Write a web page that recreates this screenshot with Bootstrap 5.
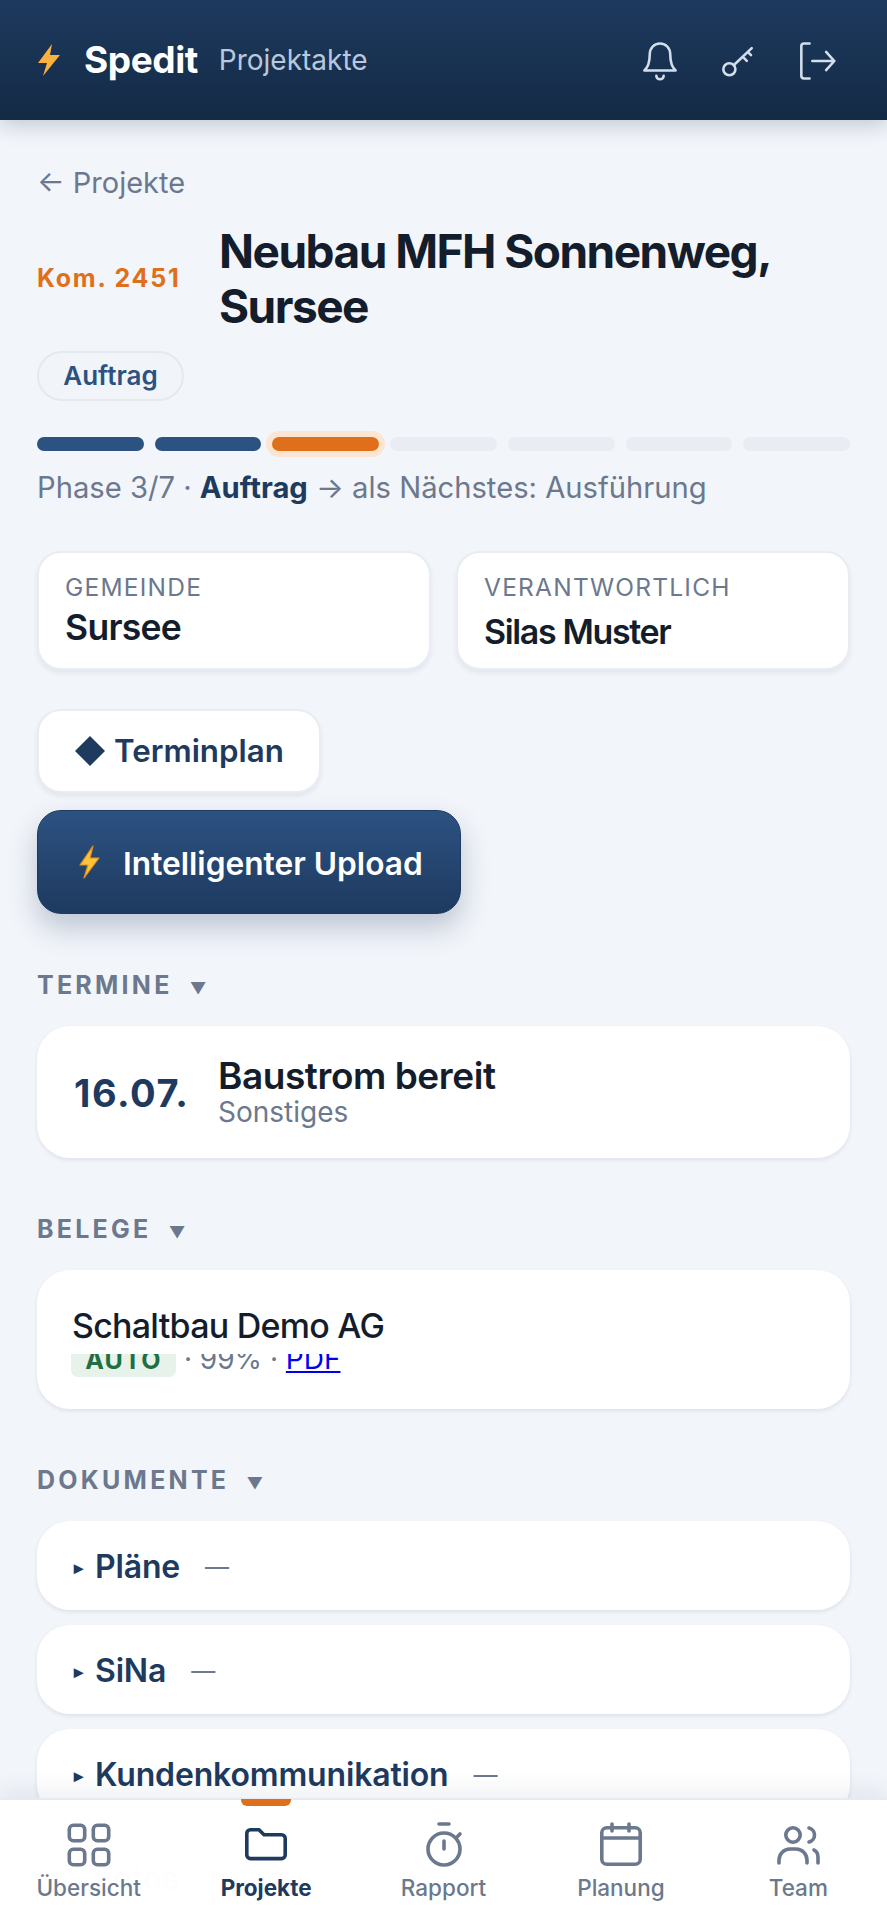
<!DOCTYPE html>
<html lang="de">
<head>
  <meta charset="UTF-8" />
  <meta name="viewport" content="width=device-width, initial-scale=1" />
  <title>Spedit Projektakte</title>
  <link href="https://cdn.jsdelivr.net/npm/bootstrap@5.3.0/dist/css/bootstrap.min.css" rel="stylesheet" />
  <style>
    html, body { height: 100%; overflow: hidden; }
    body { font-family: Inter, "Liberation Sans", sans-serif; background: #f2f5fa; color: #141d2b; }
    .app-shell { height: 1920px; overflow: hidden; position: relative; }

    .top-bar { height: 120px; padding: 0 49px 0 37px; background: linear-gradient(180deg, #1e3a5f, #132a45); box-shadow: 0 5px 20px rgba(20, 40, 70, .22); position: relative; z-index: 2; }
    .brand-name { font-size: 37px; font-weight: 700; color: #fff; letter-spacing: -.012em; margin-left: 23px; }
    .brand-sub { font-size: 28px; color: #b9c8dc; margin-left: 21px; }
    .top-icons { gap: 34px; color: #d3deeb; padding-top: 2px; }
    .top-icons svg { width: 44px; height: 44px; display: block; }

    .page-body { padding: 0 37px; }
    .back-link { display: block; margin-top: 45px; font-size: 29px; line-height: 36px; color: #6b788d; text-decoration: none; }
    .head-row { margin-top: 23px; }
    .kom-no { width: 182px; flex: none; font-size: 25px; font-weight: 700; color: #e06f1c; letter-spacing: .07em; }
    .head-title { font-size: 46px; line-height: 55px; font-weight: 700; letter-spacing: -.033em; margin: 0; color: #141d2b; }
    .status-pill { display: block; width: 147px; text-align: center; margin-top: 17px; height: 50px; line-height: 46px; font-size: 26px; font-weight: 600; color: #2c5282; background: #f1f4f8; border: 2px solid #e4e9f1; border-radius: 25px; }

    .phase-bar { margin-top: 36px; gap: 11px; }
    .phase-seg { flex: 1 1 0; height: 14px; border-radius: 7px; background: #e9edf3; }
    .phase-seg.is-done { background: #2c5282; }
    .phase-seg.is-now { background: #e06f1c; box-shadow: 0 0 0 6px #fde5d3; }
    .phase-text { margin-top: 17px; font-size: 29.2px; line-height: 40px; color: #6b788d; }
    .phase-text strong { color: #1e3a5f; font-weight: 700; }

    .info-grid { margin-top: 43px; gap: 25px; }
    .info-card { flex: 1 1 0; height: 119px; padding: 20px 26px; background: #fff; border: 2px solid #e9edf3; border-radius: 24px; box-shadow: 0 3px 5px rgba(20, 40, 70, .07); }
    .info-label { font-size: 24.5px; line-height: 28px; letter-spacing: .05em; color: #6b788d; }
    .info-value { margin-top: 5px; font-size: 35.5px; line-height: 44px; font-weight: 600; letter-spacing: -.02em; }
    .info-value.is-tight { margin-top: 9px; font-size: 34px; letter-spacing: -.04em; }

    .plan-btn { display: inline-flex; align-items: center; gap: 8px; margin-top: 39px; height: 84px; padding: 0 35px; font-size: 31.3px; font-weight: 600; color: #1e3a5f; background: #fff; border: 2px solid #e9edf3; border-radius: 24px; box-shadow: 0 3px 5px rgba(20, 40, 70, .07); vertical-align: top; }
    .plan-btn svg { width: 32px; height: 32px; }
    .upload-btn { display: inline-flex; align-items: center; gap: 21px; margin-top: 17px; height: 104px; padding: 3px 37px 0 38px; font-size: 31.7px; font-weight: 600; color: #fff; background: linear-gradient(180deg, #2c5282, #1e3a5f); border: 1px solid #1e3a5f; border-radius: 24px; box-shadow: 0 14px 28px rgba(30, 58, 95, .25); vertical-align: top; }
    .upload-btn svg { width: 26px; height: 34px; margin-top: -3px; }

    .section-head { height: 32px; margin-top: 55px; font-size: 25px; line-height: 32px; font-weight: 700; letter-spacing: .13em; color: #6b788d; }
    .section-head span { font-size: 16px; margin-left: 8px; letter-spacing: 0; }
    .white-card { background: #fff; border-radius: 33px; box-shadow: 0 2px 4px rgba(20, 40, 70, .09); }

    .date-card { margin-top: 25px; height: 132px; padding: 0 37px; }
    .date-no { width: 144px; flex: none; font-size: 38px; font-weight: 700; color: #1e3a5f; letter-spacing: .04em; padding-top: 3px; }
    .date-title { font-size: 37px; line-height: 40px; font-weight: 600; letter-spacing: -.012em; }
    .date-sub { font-size: 28px; line-height: 32px; color: #6b788d; }

    .receipt-card { margin-top: 25px; height: 139px; padding: 33px 37px 0 34px; }
    .receipt-name { font-size: 34px; line-height: 46px; font-weight: 500; letter-spacing: -.022em; padding-left: 1px; }
    .receipt-meta { height: 23px; overflow: hidden; margin-top: 5px; font-size: 28px; line-height: 10px; color: #6b788d; }
    .auto-tag { display: inline-block; width: 105px; height: 23px; text-align: center; font-size: 25px; font-weight: 700; line-height: 12px; letter-spacing: .05em; color: #1f6f43; background: #e6f2ea; border-radius: 0 0 7px 7px; margin-right: 0; vertical-align: top; }
    .receipt-meta a { color: #0000ee; text-decoration: underline; }

    .doc-list { margin-top: 25px; }
    .doc-row { height: 89px; padding: 3px 37px 0; margin-bottom: 15px; font-size: 32px; font-weight: 600; color: #1e3a5f; letter-spacing: -.005em; }
    .doc-row .caret-mark { font-size: 18px; width: 21px; flex: none; }
    .doc-row .dash-mark { font-size: 24px; font-weight: 400; color: #6b788d; margin-left: 25px; }

    .bottom-bar { position: absolute; left: 0; right: 0; bottom: 0; height: 122px; background: rgba(255, 255, 255, .994); border-top: 2px solid #e6ebf3; box-shadow: 0 -8px 22px rgba(20, 40, 70, .07); z-index: 3; }
    .tab-item { flex: 1 1 0; position: relative; text-align: center; padding-top: 21px; font-size: 22.5px; line-height: 28px; font-weight: 500; color: #6b788d; }
    .tab-item svg { width: 48px; height: 48px; display: block; margin: 0 auto 5px; }
    .tab-item.is-active { color: #1e3a5f; font-weight: 700; }
    .tab-marker { position: absolute; top: -1px; left: 50%; width: 50px; height: 7px; margin-left: -25px; background: #e06f1c; border-radius: 0 0 6px 6px; }
  </style>
</head>
<body>
  <div class="app-shell">
    <header class="top-bar d-flex align-items-center justify-content-between">
      <div class="d-flex align-items-center">
        <svg width="24" height="32" viewBox="0 0 24 32"><path d="M15 0 1 19h9L6 32l17-21h-10z" fill="#fbb13c"/></svg>
        <span class="brand-name">Spedit</span>
        <span class="brand-sub">Projektakte</span>
      </div>
      <div class="top-icons d-flex align-items-center">
        <svg viewBox="0 0 24 24" fill="none" stroke="currentColor" stroke-width="1.4" stroke-linecap="round" stroke-linejoin="round"><path d="M12 2.500c-3.400 0-5.600 2.600-5.600 6 0 4-.9 6.900-2.900 8.700h17c-2-1.800-2.900-4.700-2.900-8.700 0-3.400-2.200-6-5.600-6z"/><path d="M10 20a2 2 0 0 0 4 0"/></svg>
        <svg viewBox="0 0 24 24" fill="none" stroke="currentColor" stroke-width="1.4" stroke-linecap="round" stroke-linejoin="round"><circle cx="7.300" cy="16.500" r="3.300"/><path d="M9.800 14.200 19.500 5M14.500 9.600l2.300 2.300M17.300 7l1.800 1.800"/></svg>
        <svg viewBox="0 0 24 24" fill="none" stroke="currentColor" stroke-width="1.4" stroke-linecap="round" stroke-linejoin="round"><path d="M8.500 2.500H5.500A1.500 1.500 0 0 0 4 4v16a1.500 1.500 0 0 0 1.500 1.500h3"/><path d="M10 12h12M17.500 7l4.500 5-4.500 5"/></svg>
      </div>
    </header>

    <main class="page-body">
      <a class="back-link" href="#">← Projekte</a>

      <div class="head-row d-flex align-items-center">
        <div class="kom-no">Kom. 2451</div>
        <h1 class="head-title">Neubau MFH Sonnenweg, Sursee</h1>
      </div>
      <span class="status-pill">Auftrag</span>

      <div class="phase-bar d-flex">
        <div class="phase-seg is-done"></div>
        <div class="phase-seg is-done"></div>
        <div class="phase-seg is-now"></div>
        <div class="phase-seg"></div>
        <div class="phase-seg"></div>
        <div class="phase-seg"></div>
        <div class="phase-seg"></div>
      </div>
      <div class="phase-text">Phase 3/7 · <strong>Auftrag</strong> → als Nächstes: Ausführung</div>

      <div class="info-grid d-flex">
        <div class="info-card">
          <div class="info-label">GEMEINDE</div>
          <div class="info-value">Sursee</div>
        </div>
        <div class="info-card">
          <div class="info-label">VERANTWORTLICH</div>
          <div class="info-value is-tight">Silas Muster</div>
        </div>
      </div>

      <div><div class="plan-btn"><svg viewBox="0 0 32 32"><path d="M16 1 31 16 16 31 1 16z" fill="#1e3a5f"/></svg>Terminplan</div></div>
      <div><div class="upload-btn"><svg viewBox="0 0 26 34"><path d="M17 1 4 20h8L8 33l15-20h-9z" fill="#fcc43a" stroke="#e8901c" stroke-width="1.200" stroke-linejoin="round"/></svg>Intelligenter Upload</div></div>

      <div class="section-head">TERMINE <span>▼</span></div>
      <div class="white-card date-card d-flex align-items-center">
        <div class="date-no">16.07.</div>
        <div>
          <div class="date-title">Baustrom bereit</div>
          <div class="date-sub">Sonstiges</div>
        </div>
      </div>

      <div class="section-head">BELEGE <span>▼</span></div>
      <div class="white-card receipt-card">
        <div class="receipt-name">Schaltbau Demo AG</div>
        <div class="receipt-meta"><span class="auto-tag">AUTO</span> · 99% · <a href="#">PDF</a></div>
      </div>

      <div class="section-head">DOKUMENTE <span>▼</span></div>
      <div class="doc-list">
        <div class="white-card doc-row d-flex align-items-center"><span class="caret-mark">▸</span>Pläne<span class="dash-mark">—</span></div>
        <div class="white-card doc-row d-flex align-items-center"><span class="caret-mark">▸</span>SiNa<span class="dash-mark">—</span></div>
        <div class="white-card doc-row d-flex align-items-center"><span class="caret-mark">▸</span>Kundenkommunikation<span class="dash-mark">—</span></div>
        <div class="white-card doc-row d-flex align-items-center"><span class="caret-mark">▸</span>Fotos<span class="dash-mark">—</span></div>
      </div>
    </main>

    <nav class="bottom-bar d-flex">
      <div class="tab-item">
        <svg viewBox="0 0 24 24" fill="none" stroke="currentColor" stroke-width="1.800"><rect x="2.150" y="2.150" width="7.700" height="7.700" rx="2"/><rect x="14.150" y="2.150" width="7.700" height="7.700" rx="2"/><rect x="2.150" y="14.150" width="7.700" height="7.700" rx="2"/><rect x="14.150" y="14.150" width="7.700" height="7.700" rx="2"/></svg>
        Übersicht
      </div>
      <div class="tab-item is-active">
        <span class="tab-marker"></span>
        <svg viewBox="0 0 24 24" fill="none" stroke="currentColor" stroke-width="1.800" stroke-linejoin="round"><path d="M2.400 6.200a1.800 1.800 0 0 1 1.800-1.800h4.300l2.500 2.500h8.800a1.800 1.800 0 0 1 1.800 1.800v8.300a1.800 1.800 0 0 1-1.800 1.800H4.200a1.800 1.800 0 0 1-1.800-1.800z"/></svg>
        Projekte
      </div>
      <div class="tab-item">
        <svg viewBox="0 0 24 24" fill="none" stroke="currentColor" stroke-width="1.800" stroke-linecap="round"><circle cx="12" cy="14" r="8"/><path d="M9.500 1.500h5M12 10v4M18.500 8l1.500-1.500"/></svg>
        Rapport
      </div>
      <div class="tab-item">
        <svg viewBox="0 0 24 24" fill="none" stroke="currentColor" stroke-width="1.800" stroke-linecap="round"><rect x="2.400" y="3.400" width="19.200" height="18.200" rx="2.500"/><path d="M2.400 8.500h19.200M7.500 1.500V5M16 1.500V5"/></svg>
        Planung
      </div>
      <div class="tab-item">
        <svg viewBox="0 0 24 24" fill="none" stroke="currentColor" stroke-width="1.800" stroke-linecap="round"><circle cx="9.500" cy="7" r="3.600"/><path d="M17.500 3.500a3.600 3.600 0 0 1 0 7M2.500 21v-1.500a5.500 5.500 0 0 1 5.500-5.500h3a5.500 5.500 0 0 1 5.500 5.500V21M20 14.500a4 4 0 0 1 2 3.500v3"/></svg>
        Team
      </div>
    </nav>
  </div>
</body>
</html>
